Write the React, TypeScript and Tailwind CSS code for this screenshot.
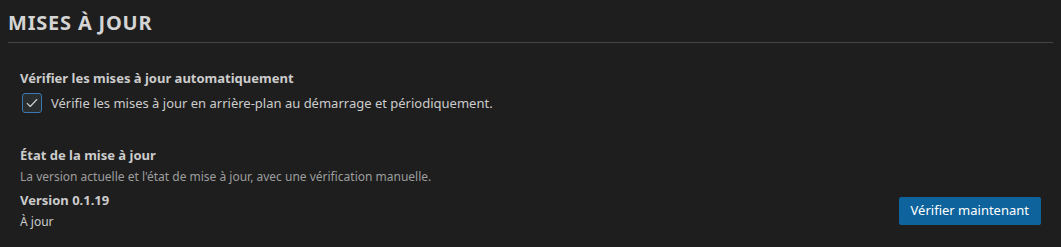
import { useState } from "react";

export default function App() {
  const [autoCheck, setAutoCheck] = useState(true);

  return (
    <div
      className="h-[247px] w-full bg-[#1e1e1e] px-2 text-[#cccccc]"
      style={{ fontFamily: '"Noto Sans", "Open Sans", sans-serif' }}
    >
      <h2 className="border-b border-[#454545] pt-[10px] pb-[6px] text-[20px] leading-[26px] font-bold tracking-[0.04em] text-[#d4d4d4] uppercase">
        Mises à jour
      </h2>

      <div className="px-3 pt-[26px]">
        <div className="text-[13px] leading-[18px] font-bold">
          Vérifier les mises à jour automatiquement
        </div>
        <label className="mt-[6px] flex cursor-pointer items-center gap-[9px]">
          <button
            type="button"
            onClick={() => setAutoCheck((prev) => !prev)}
            className="ml-[2px] flex h-[20px] w-[20px] items-center justify-center rounded-[3px] border border-[#3a78b5] bg-[#2a2d2e]"
          >
            {autoCheck && (
              <svg width="14" height="14" viewBox="0 0 16 16" fill="none">
                <path
                  d="M2.5 8.5l3.5 3.5 7.5-8"
                  stroke="#d0d0d0"
                  strokeWidth="1.3"
                  strokeLinecap="round"
                  strokeLinejoin="round"
                />
              </svg>
            )}
          </button>
          <span className="text-[13px] leading-[18px]">
            Vérifie les mises à jour en arrière-plan au démarrage et périodiquement.
          </span>
        </label>
      </div>

      <div className="flex justify-between px-3 pt-[33px]">
        <div>
          <div className="text-[13px] leading-[18px] font-bold">
            État de la mise à jour
          </div>
          <div className="mt-[4px] text-[12px] leading-[17px] text-[#9d9d9d]">
            La version actuelle et l'état de mise à jour, avec une vérification manuelle.
          </div>
          <div className="mt-[6px] text-[13px] leading-[18px] font-bold">
            Version 0.1.19
          </div>
          <div className="mt-[4px] text-[12px] leading-[17px]">À jour</div>
        </div>
        <button
          type="button"
          className="mt-[51px] h-[28px] self-start rounded-[2px] bg-[#0e639c] px-[12px] text-[13px] text-white"
        >
          Vérifier maintenant
        </button>
      </div>
    </div>
  );
}
